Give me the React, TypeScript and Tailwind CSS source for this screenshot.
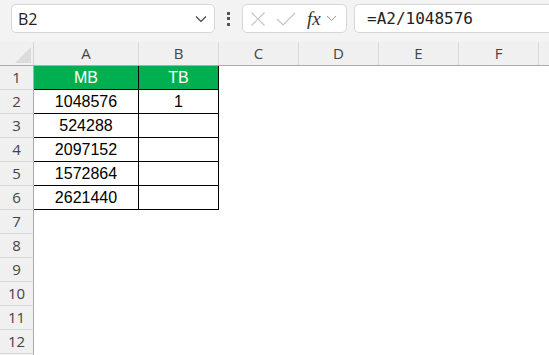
import React from "react";

const cols = ["A", "B", "C", "D", "E", "F"];
const colW = [105, 80, 80, 80, 80, 80];
const data: [string, string][] = [
  ["1048576", "1"],
  ["524288", ""],
  ["2097152", ""],
  ["1572864", ""],
  ["2621440", ""],
];

export default function App() {
  const ui = { fontFamily: '"Open Sans", "Noto Sans", sans-serif' };
  const cell = { fontFamily: '"Liberation Sans", Arial, sans-serif' };
  return (
    <div className="w-[549px] h-[355px] overflow-hidden bg-white" style={ui}>
      {/* toolbar */}
      <div className="h-[42px] bg-[#f3f3f3] flex items-start pt-[4px]">
        <div className="ml-[11px] w-[204px] h-[29px] rounded-[5px] border border-[#d6d6d6] bg-white flex items-center justify-between pl-[6px] pr-[6px]">
          <span className="text-[16px] text-[#222]">B2</span>
          <svg width="12" height="8" viewBox="0 0 12 8" className="mr-[1px]">
            <path d="M1 1.5 L6 6.5 L11 1.5" fill="none" stroke="#444" strokeWidth="1.2" />
          </svg>
        </div>
        <div className="w-[27px] h-[29px] flex flex-col items-center justify-center gap-[2.5px]">
          <div className="w-[3px] h-[3px] bg-[#555]" />
          <div className="w-[3px] h-[3px] bg-[#555]" />
          <div className="w-[3px] h-[3px] bg-[#555]" />
        </div>
        <div className="w-[105px] h-[29px] rounded-[5px] border border-[#d6d6d6] bg-white flex items-center">
          <svg width="16" height="16" viewBox="0 0 16 16" className="ml-[7px]">
            <path d="M1.5 1.5 L14.5 14.5 M14.5 1.5 L1.5 14.5" stroke="#c4c4c4" strokeWidth="1.2" fill="none" />
          </svg>
          <svg width="20" height="14" viewBox="0 0 20 14" className="ml-[10px]">
            <path d="M1 7 L7 13 L19 1" stroke="#c4c4c4" strokeWidth="1.2" fill="none" />
          </svg>
          <span
            className="ml-[11px] text-[19px] italic text-[#333] leading-none"
            style={{ fontFamily: '"Liberation Serif", serif' }}
          >
            fx
          </span>
          <svg width="11" height="7" viewBox="0 0 11 7" className="ml-[5px]">
            <path d="M1 1 L5.5 5.5 L10 1" fill="none" stroke="#999" strokeWidth="1" />
          </svg>
        </div>
        <div className="ml-[7px] flex-1 h-[29px] rounded-l-[5px] border border-r-0 border-[#d6d6d6] bg-white flex items-center pl-[12px]">
          <span className="text-[16px] text-[#222]" style={{ fontFamily: '"DejaVu Sans Mono", monospace' }}>
            =A2/1048576
          </span>
        </div>
      </div>
      {/* column header */}
      <div className="flex h-[24px] bg-[#f0f0f0] border-b border-[#ababab]">
        <div className="w-[34px] shrink-0 border-r border-[#d4d4d4] relative">
          <svg width="16" height="16" viewBox="0 0 16 16" className="absolute left-[15px] top-[5px]">
            <path d="M16 0 L16 16 L0 16 Z" fill="#dcdcdc" />
          </svg>
        </div>
        {cols.map((c, i) => (
          <div
            key={c}
            className="shrink-0 border-r border-[#d9d9d9] flex items-center justify-center text-[15px] text-[#444]"
            style={{ width: colW[i] }}
          >
            {c}
          </div>
        ))}
        <div className="flex-1" />
      </div>
      {/* rows */}
      {Array.from({ length: 13 }).map((_, r) => {
        const rn = r + 1;
        return (
          <div key={rn} className="flex h-[24px]">
            <div className="w-[34px] shrink-0 bg-[#f0f0f0] border-r border-[#ababab] border-b border-b-[#d9d9d9] flex items-center justify-center text-[15px] text-[#444]">
              {rn <= 12 ? rn : ""}
            </div>
            {rn === 1 && (
              <>
                <div className="w-[105px] shrink-0 bg-[#00b050] border-r border-b border-black flex items-center justify-center text-[16px] text-white" style={cell}>
                  MB
                </div>
                <div className="w-[80px] shrink-0 bg-[#00b050] border-r border-b border-black flex items-center justify-center text-[16px] text-white" style={cell}>
                  TB
                </div>
              </>
            )}
            {rn >= 2 && rn <= 6 && (
              <>
                <div className="w-[105px] shrink-0 border-r border-b border-black flex items-center justify-center text-[16px] text-black" style={cell}>
                  {data[rn - 2][0]}
                </div>
                <div className="w-[80px] shrink-0 border-r border-b border-black flex items-center justify-center text-[16px] text-black" style={cell}>
                  {data[rn - 2][1]}
                </div>
              </>
            )}
            <div className="flex-1" />
          </div>
        );
      })}
    </div>
  );
}
